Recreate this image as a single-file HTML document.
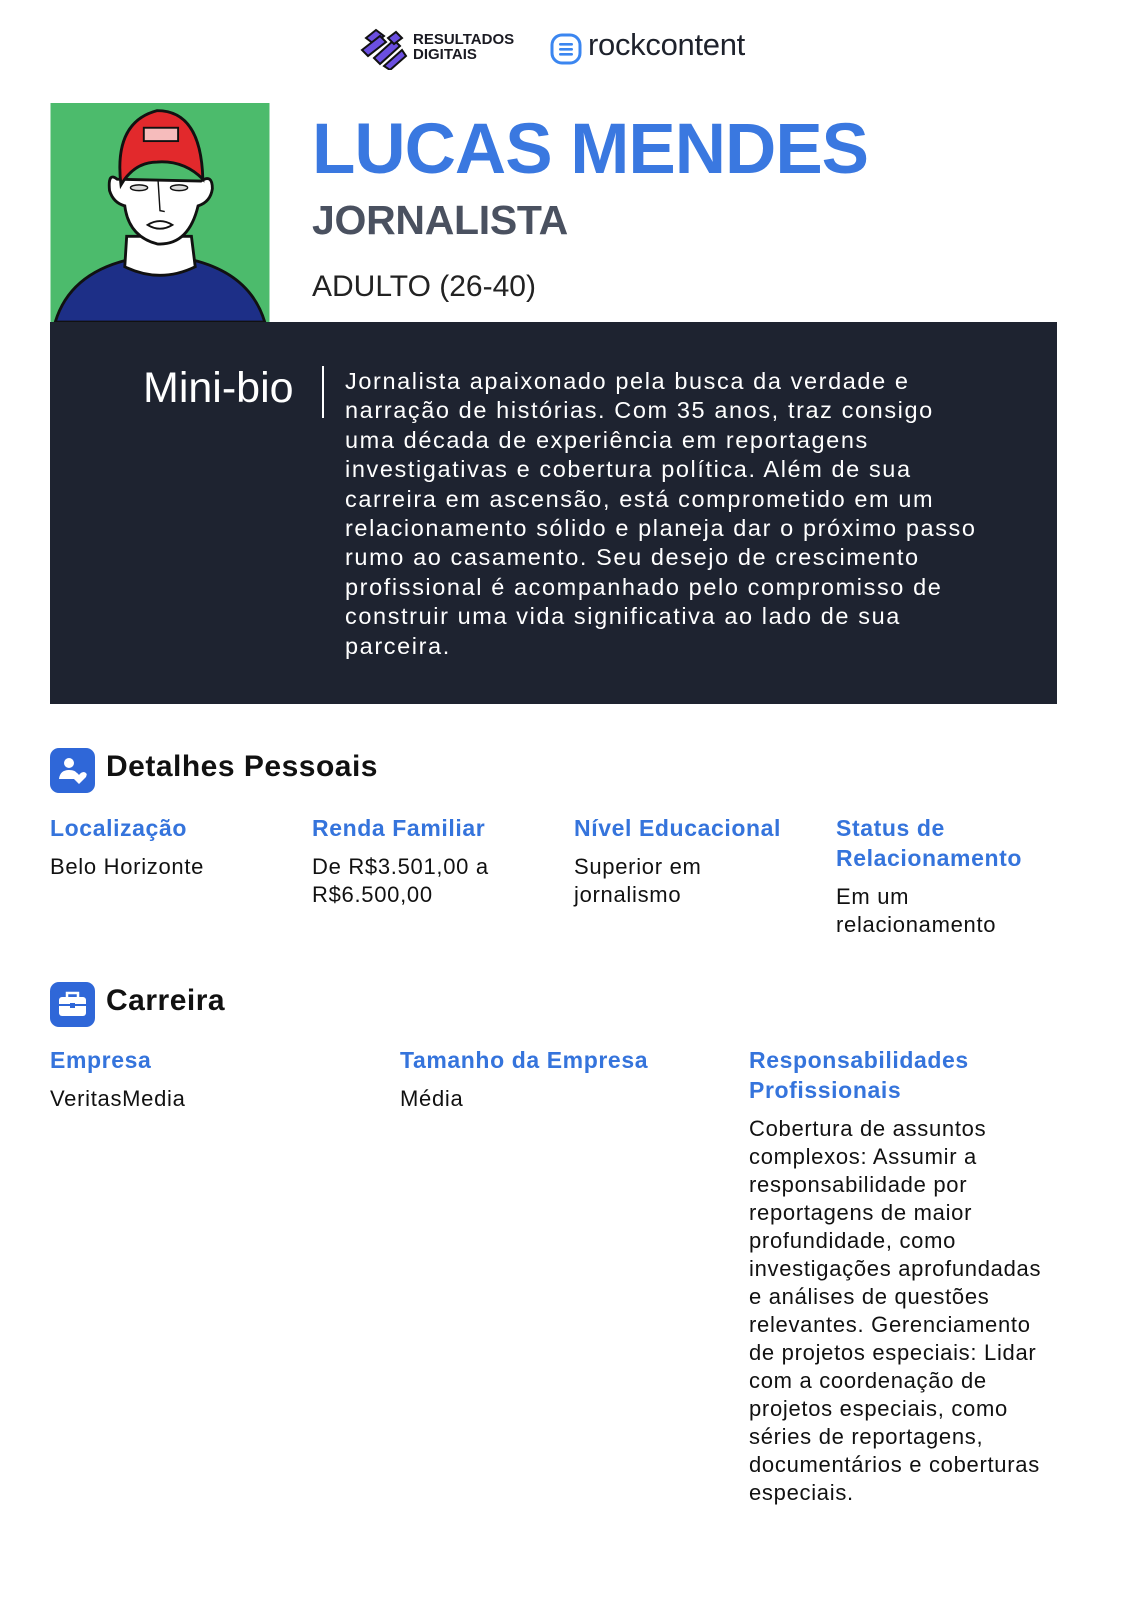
<!DOCTYPE html>
<html><head><meta charset="utf-8"><style>
*{margin:0;padding:0;box-sizing:border-box}
body{width:1130px;height:1600px;background:#fff;font-family:"Liberation Sans",sans-serif;position:relative;overflow:hidden;color:#111}
.a{position:absolute}
.lab{color:#3574dc;font-weight:bold;font-size:23px;line-height:30px;letter-spacing:0.6px}
.val{font-size:22px;line-height:28px;color:#111;letter-spacing:0.7px}
.bio{font-size:23.5px;line-height:29.4px;color:#fff;letter-spacing:1.6px}
</style></head><body>
<!-- logos -->
<svg class="a" style="left:360px;top:28px" width="50" height="42" viewBox="0 0 50 42">
<g fill="#6b4fe0" stroke="#111" stroke-width="2">
<path d="M6 10 L16 2 L24 8 L14 16Z"/><path d="M2 22 L20 8 L26 14 L8 28Z"/>
<path d="M14 30 L34 12 L40 18 L20 36Z"/><path d="M24 38 L42 22 L46 28 L30 42Z"/>
<path d="M28 10 L36 4 L42 10 L34 16Z"/></g></svg>
<div class="a" style="left:413px;top:32px;font-weight:bold;font-size:15px;line-height:15px;color:#1a1a22">RESULTADOS<br>DIGITAIS</div>
<svg class="a" style="left:550px;top:33px" width="32" height="32" viewBox="0 0 32 32"><rect x="2" y="2" width="28" height="28" rx="10" fill="none" stroke="#3b86f0" stroke-width="3"/><rect x="9" y="10" width="14" height="2.6" rx="1.3" fill="#3b86f0"/><rect x="9" y="15" width="14" height="2.6" rx="1.3" fill="#3b86f0"/><rect x="9" y="20" width="14" height="2.6" rx="1.3" fill="#3b86f0"/></svg>
<div class="a" style="left:588px;top:27px;font-size:31px;color:#1e222c;letter-spacing:-0.3px">rockcontent</div>
<!-- avatar -->
<svg class="a" style="left:50px;top:103px" width="220" height="219" viewBox="0 0 230 230">
<rect width="230" height="230" fill="#4cbb6c"/>
<path d="M5 230 Q20 180 80 165 L150 165 Q210 180 225 230Z" fill="#1d2f87" stroke="#111" stroke-width="3"/>
<path d="M80 140 L78 172 Q115 190 152 172 L148 140Z" fill="#fff" stroke="#111" stroke-width="3"/>
<path d="M70 80 Q60 72 62 92 Q66 105 78 108 Q82 140 112 148 Q145 150 155 108 Q168 104 170 90 Q170 74 158 82 Z" fill="#fff" stroke="#111" stroke-width="3"/>
<path d="M74 86 Q66 20 112 8 Q158 8 160 80 Q140 60 112 62 Q88 62 74 86Z" fill="#e2292c" stroke="#111" stroke-width="3"/>
<rect x="98" y="26" width="36" height="14" fill="#f6bcbc" stroke="#111" stroke-width="2"/>
<ellipse cx="93" cy="89" rx="9" ry="3" fill="#ddd" stroke="#111" stroke-width="1.5"/><ellipse cx="135" cy="89" rx="9" ry="3" fill="#ddd" stroke="#111" stroke-width="1.5"/>
<path d="M113 82 L115 113 L120 114" fill="none" stroke="#111" stroke-width="1.5"/>
<path d="M102 128 Q115 120 128 128 Q115 136 102 128Z" fill="#fff" stroke="#111" stroke-width="2"/>
</svg>
<div class="a" style="left:312px;top:109px;font-size:71px;font-weight:bold;color:#3a78e0;letter-spacing:-1px">LUCAS MENDES</div>
<div class="a" style="left:312px;top:197px;font-size:41px;font-weight:bold;color:#4a5160;letter-spacing:-0.3px">JORNALISTA</div>
<div class="a" style="left:312px;top:270px;font-size:30px;color:#222">ADULTO (26-40)</div>
<!-- bio -->
<div class="a" style="left:50px;top:322px;width:1007px;height:382px;background:#1e2330"></div>
<div class="a" style="left:143px;top:364px;font-size:43px;color:#fff">Mini-bio</div>
<div class="a" style="left:322px;top:366px;width:2px;height:52px;background:#fff"></div>
<div class="a bio" style="left:345px;top:367px">Jornalista apaixonado pela busca da verdade e<br>narração de histórias. Com 35 anos, traz consigo<br>uma década de experiência em reportagens<br>investigativas e cobertura política. Além de sua<br>carreira em ascensão, está comprometido em um<br>relacionamento sólido e planeja dar o próximo passo<br>rumo ao casamento. Seu desejo de crescimento<br>profissional é acompanhado pelo compromisso de<br>construir uma vida significativa ao lado de sua<br>parceira.</div>
<!-- details -->
<svg class="a" style="left:50px;top:748px" width="45" height="45" viewBox="0 0 45 45"><rect width="45" height="45" rx="9" fill="#2f67d8"/><circle cx="19" cy="15" r="5" fill="#fff"/><path d="M9 31 Q10 22 19 22 Q26 22 27 26 L27 31Z" fill="#fff"/><path d="M29 36 L22 29 Q20 25 24 24 Q27 24 29 27 Q31 24 34 24 Q38 25 36 29Z" fill="#fff"/></svg>
<div class="a" style="left:106px;top:750px;font-size:30px;font-weight:bold;color:#111;letter-spacing:0.5px">Detalhes Pessoais</div>
<div class="a" style="left:50px;top:813px"><div class="lab">Localização</div><div class="val" style="margin-top:10px">Belo Horizonte</div></div>
<div class="a" style="left:312px;top:813px"><div class="lab">Renda Familiar</div><div class="val" style="margin-top:10px">De R$3.501,00 a<br>R$6.500,00</div></div>
<div class="a" style="left:574px;top:813px"><div class="lab">Nível Educacional</div><div class="val" style="margin-top:10px">Superior em<br>jornalismo</div></div>
<div class="a" style="left:836px;top:813px"><div class="lab">Status de<br>Relacionamento</div><div class="val" style="margin-top:10px">Em um<br>relacionamento</div></div>
<!-- career -->
<svg class="a" style="left:50px;top:982px" width="45" height="45" viewBox="0 0 45 45"><rect width="45" height="45" rx="9" fill="#2f67d8"/><rect x="9" y="15" width="27" height="19" rx="3" fill="#fff"/><path d="M17 15 L17 11 L28 11 L28 15" fill="none" stroke="#fff" stroke-width="2.5"/><line x1="9" y1="23" x2="36" y2="23" stroke="#2f67d8" stroke-width="2"/><rect x="20" y="21" width="5" height="5" fill="#2f67d8"/></svg>
<div class="a" style="left:106px;top:984px;font-size:30px;font-weight:bold;color:#111;letter-spacing:0.5px">Carreira</div>
<div class="a" style="left:50px;top:1045px"><div class="lab">Empresa</div><div class="val" style="margin-top:10px">VeritasMedia</div></div>
<div class="a" style="left:400px;top:1045px"><div class="lab">Tamanho da Empresa</div><div class="val" style="margin-top:10px">Média</div></div>
<div class="a" style="left:749px;top:1045px"><div class="lab">Responsabilidades<br>Profissionais</div><div class="val" style="margin-top:10px">Cobertura de assuntos<br>complexos: Assumir a<br>responsabilidade por<br>reportagens de maior<br>profundidade, como<br>investigações aprofundadas<br>e análises de questões<br>relevantes. Gerenciamento<br>de projetos especiais: Lidar<br>com a coordenação de<br>projetos especiais, como<br>séries de reportagens,<br>documentários e coberturas<br>especiais.</div></div>
</body></html>
